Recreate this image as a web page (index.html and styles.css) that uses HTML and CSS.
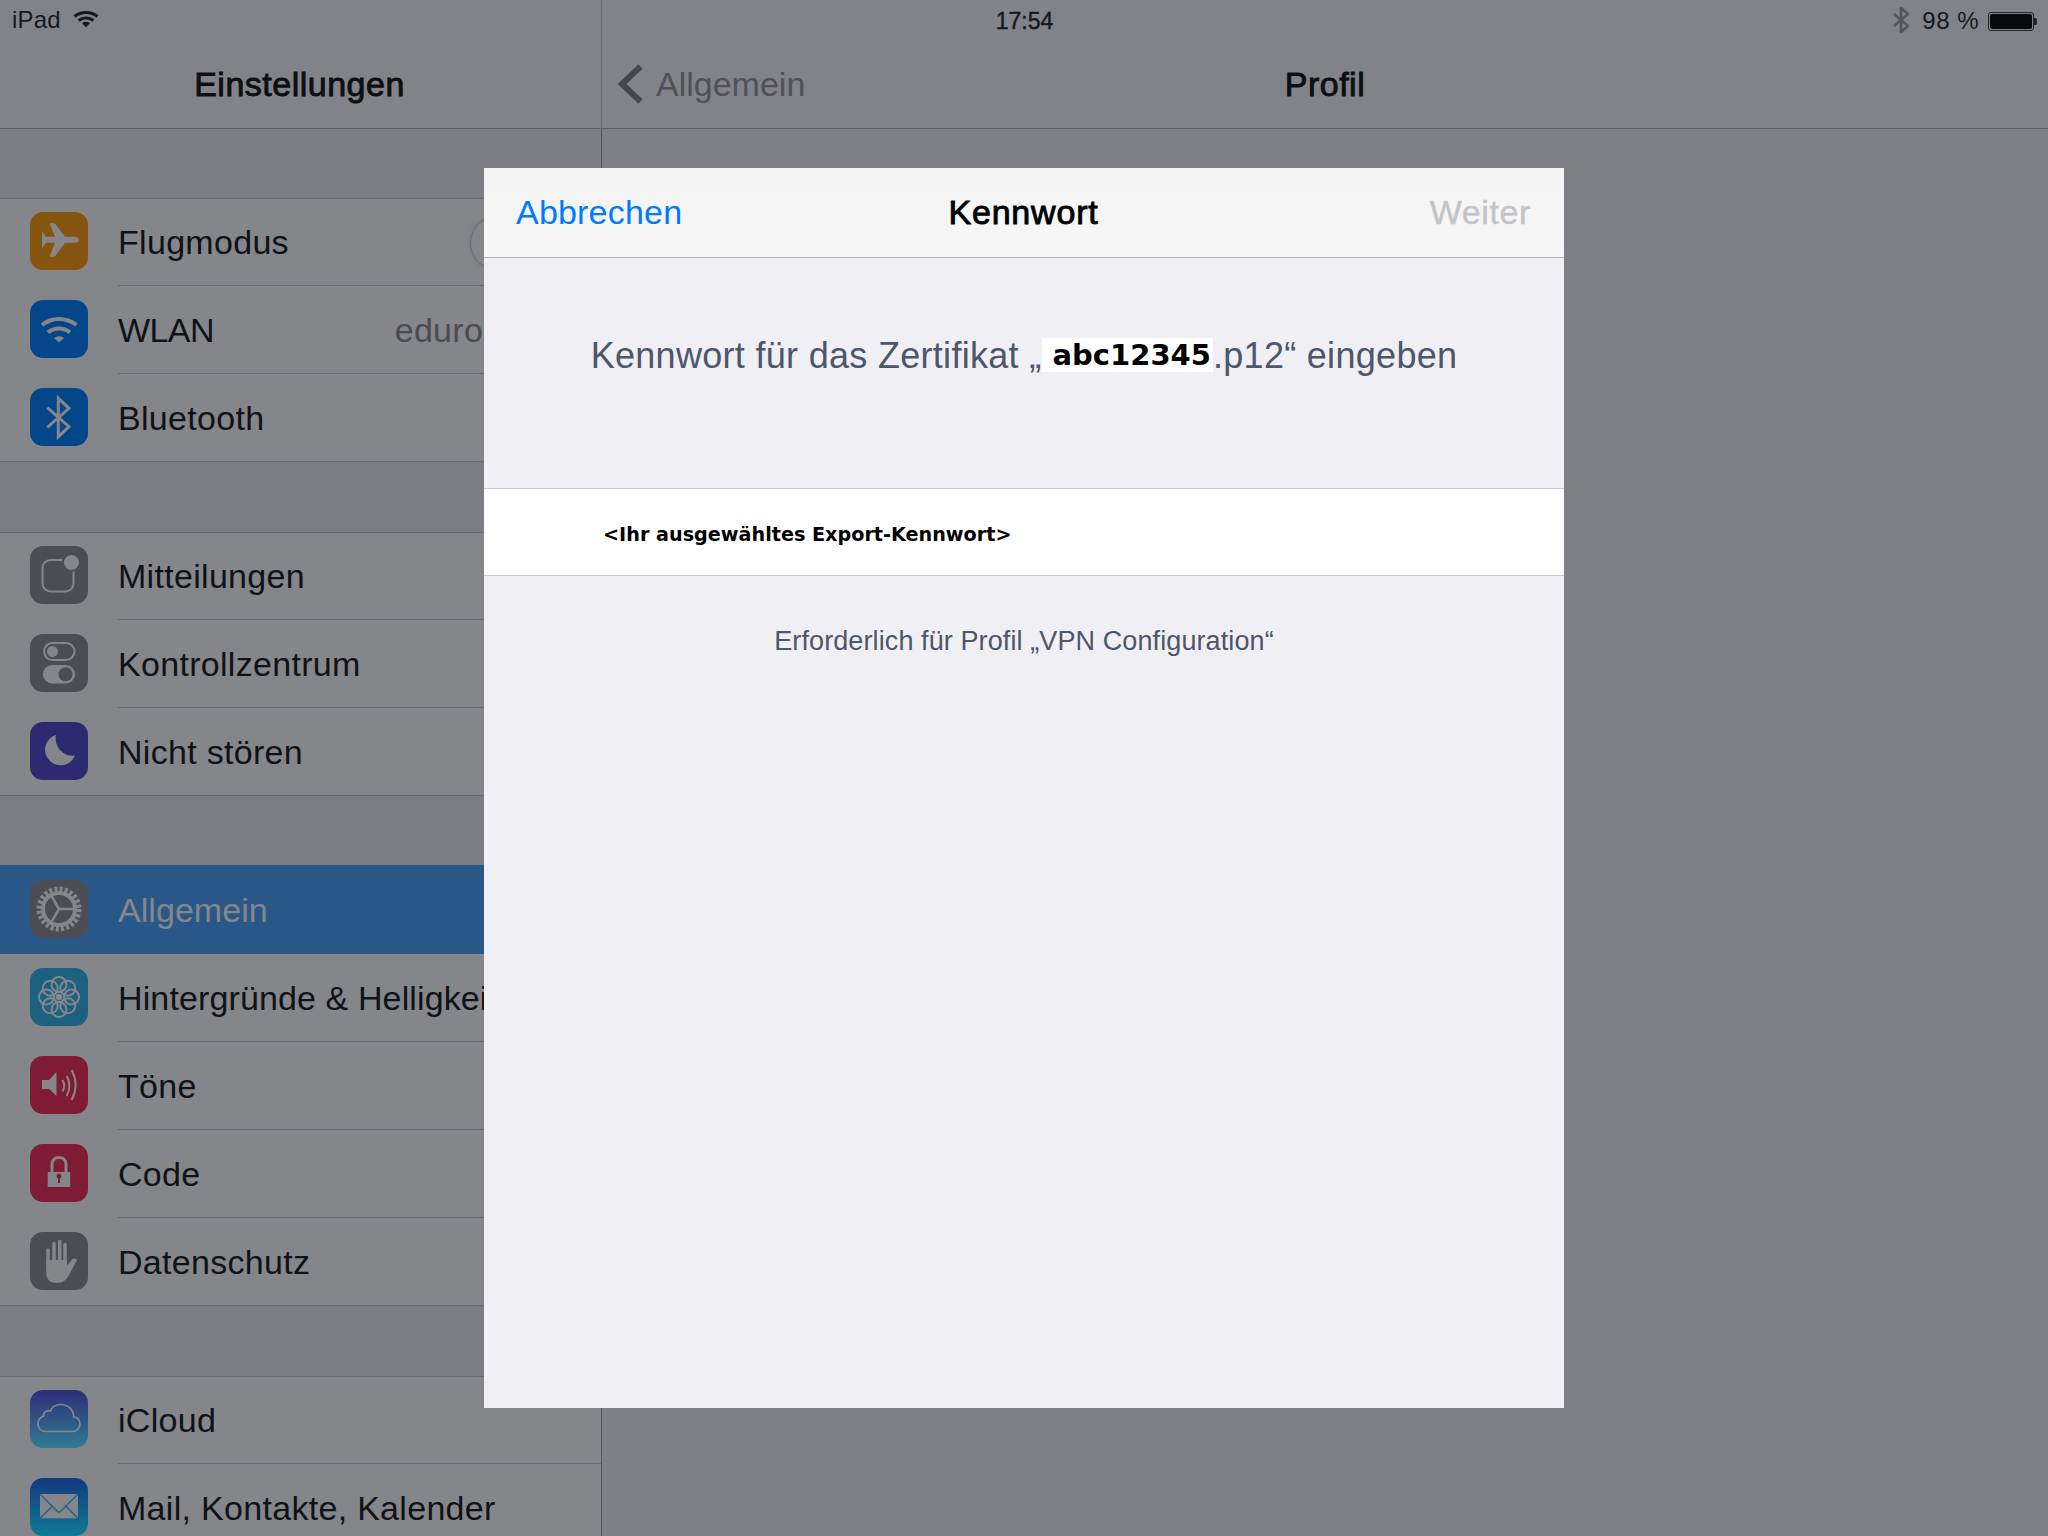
FILE: index.html
```html
<!DOCTYPE html>
<html lang="de">
<head>
<meta charset="utf-8">
<title>Profil</title>
<link rel="stylesheet" href="styles.css">
</head>
<body>
<div class="screen">
  <div class="status">
    <div class="status-left">
      <span>iPad</span>
      <svg class="s-wifi" viewBox="0 0 25 18"><path d="M1 6.5C7.5 1 17.5 1 24 6.5" /><path d="M5 10.5C9.5 7 15.500 7 20 10.500"/><path class="fill" d="M8.500 13Q12.500 10.500 16.500 13L12.500 17.500Z"/></svg>
    </div>
    <div class="status-time">17:54</div>
    <div class="status-right">
      <svg class="s-bt" viewBox="0 0 16 26"><path d="M1 7L15 19L8 25V1L15 7L1 19"/></svg>
      <span>98 %</span>
      <div class="battery"><div class="battery-level"></div></div>
      <div class="battery-nub"></div>
    </div>
  </div>

  <aside class="sidebar">
    <header class="nav nav-side"><h1 class="title">Einstellungen</h1></header>
    <div class="list">
      <section class="group">
        <div class="row first">
          <svg class="icon" viewBox="0 0 58 58"><rect class="bg amber" width="58" height="58" rx="13"/><path class="g" d="M49 27.800C49 26 47 24.700 44 24.700H35L24.700 11.300H19.500L25 24.700H16L12.500 19.500H12V36H12.500L16 30.800H25L19.500 44.700H24.700L35 30.800H44C47 30.800 49 29.500 49 27.800Z"/></svg>
          <div class="row-body"><span>Flugmodus</span><div class="toggle"></div></div>
        </div>
        <div class="row">
          <svg class="icon" viewBox="0 0 58 58"><rect class="bg blue" width="58" height="58" rx="13"/><path class="l w4" d="M12 25C22 17 36 17 46.500 25"/><path class="l w4" d="M18 32.500C24 27 34 27 40 32.500"/><path class="g" d="M24 38Q29 34.500 34 38L29 42.500Z"/></svg>
          <div class="row-body"><span class="tight">WLAN</span><span class="value">eduroam</span></div>
        </div>
        <div class="row last">
          <svg class="icon" viewBox="0 0 58 58"><rect class="bg blue" width="58" height="58" rx="13"/><path class="l w3" d="M17.300 19.700L39 38.700L28.300 48.700V10.300L39 20.300L17.300 39.300"/></svg>
          <div class="row-body"><span>Bluetooth</span></div>
        </div>
      </section>

      <section class="group">
        <div class="row first">
          <svg class="icon" viewBox="0 0 58 58"><rect class="bg slate" width="58" height="58" rx="13"/><rect class="l w2" x="12.500" y="14" width="31" height="31.500" rx="8"/><circle class="g ring" cx="41.500" cy="16.500" r="8.500"/></svg>
          <div class="row-body"><span>Mitteilungen</span></div>
        </div>
        <div class="row">
          <svg class="icon" viewBox="0 0 58 58"><rect class="bg slate" width="58" height="58" rx="13"/><rect class="l w2" x="14" y="9" width="30.500" height="17" rx="8.500"/><circle class="g" cx="22.500" cy="17.500" r="5.500"/><rect class="g" x="13" y="31" width="32" height="18.500" rx="9.250"/><circle class="knob" cx="35.500" cy="40.300" r="7"/></svg>
          <div class="row-body"><span>Kontrollzentrum</span></div>
        </div>
        <div class="row last">
          <svg class="icon" viewBox="0 0 58 58"><rect class="bg indigo" width="58" height="58" rx="13"/><path class="g" d="M26 13A15.500 15.500 0 1 0 45 33.500A17 17 0 0 1 26 13Z"/></svg>
          <div class="row-body"><span>Nicht stören</span></div>
        </div>
      </section>

      <section class="group">
        <div class="row selected">
          <svg class="icon" viewBox="0 0 58 58"><rect class="bg slate" width="58" height="58" rx="13"/><circle class="teeth" cx="29" cy="29" r="19.500"/><circle class="l w4" cx="29" cy="29" r="16"/><path class="l w25" d="M29 29H45M29 29L21 15.200M29 29L21 42.800"/></svg>
          <div class="row-body"><span>Allgemein</span></div>
        </div>
        <div class="row">
          <svg class="icon" viewBox="0 0 58 58"><rect class="bg teal" width="58" height="58" rx="13"/><g class="l w2"><circle cx="41.500" cy="29" r="7.500"/><circle cx="37.800" cy="37.800" r="7.500"/><circle cx="29" cy="41.500" r="7.500"/><circle cx="20.200" cy="37.800" r="7.500"/><circle cx="16.500" cy="29" r="7.500"/><circle cx="20.200" cy="20.200" r="7.500"/><circle cx="29" cy="16.500" r="7.500"/><circle cx="37.800" cy="20.200" r="7.500"/></g><circle class="g" cx="29" cy="29" r="3.300"/></svg>
          <div class="row-body"><span class="snug">Hintergründe &amp; Helligkeit</span></div>
        </div>
        <div class="row">
          <svg class="icon" viewBox="0 0 58 58"><rect class="bg crimson" width="58" height="58" rx="13"/><path class="g" d="M12 24H19L26.500 16V40L19 33H12Z"/><path class="l w2" d="M32.500 24Q36 30 32.500 35.500"/><path class="l w2" d="M36.700 20Q42 30 36.700 40"/><path class="l w2" d="M41.700 14Q49.500 29 41.700 44"/></svg>
          <div class="row-body"><span>Töne</span></div>
        </div>
        <div class="row">
          <svg class="icon" viewBox="0 0 58 58"><rect class="bg crimson" width="58" height="58" rx="13"/><path class="l w3" d="M22 29V20.500C22 11 36 11 36 20.500V29"/><rect class="g" x="17.700" y="28" width="22.500" height="15"/><path class="hole" d="M29 29.500a2.500 2.500 0 0 1 1 4.800V39H28V34.300A2.500 2.500 0 0 1 29 29.500Z"/></svg>
          <div class="row-body"><span>Code</span></div>
        </div>
        <div class="row last">
          <svg class="icon" viewBox="0 0 58 58"><rect class="bg slate" width="58" height="58" rx="13"/><path class="l w35" d="M18 18V32M24 11.500V30M29.700 9.500V30M35 12.500V32"/><path class="g" d="M16.200 28H37V33.500L43 26.500Q45 25.500 47 28L39 43Q35 51 27 51Q16.200 51 16.200 40Z"/></svg>
          <div class="row-body"><span>Datenschutz</span></div>
        </div>
      </section>

      <section class="group">
        <div class="row first">
          <svg class="icon" viewBox="0 0 58 58"><defs><linearGradient id="cloud" x1="0" y1="0" x2="0" y2="1"><stop offset="0" stop-color="#2f2e78"/><stop offset="1" stop-color="#2f7a92"/></linearGradient></defs><rect fill="url(#cloud)" width="58" height="58" rx="13"/><path class="l w17" d="M16 41.500H42C47 41.500 50 37.500 50 34C50 30 47 27 43.500 27C44 20 38 14.500 31 14.500C26 14.500 22 17 20.500 21C17 20 13 22 13.500 26C10 27.500 8 30.500 8 34C8 38 11 41.500 16 41.500Z"/></svg>
          <div class="row-body"><span>iCloud</span></div>
        </div>
        <div class="row">
          <svg class="icon" viewBox="0 0 58 58"><defs><linearGradient id="mail" x1="0" y1="0" x2="0" y2="1"><stop offset="0" stop-color="#14397f"/><stop offset="1" stop-color="#0f7a94"/></linearGradient></defs><rect fill="url(#mail)" width="58" height="58" rx="13"/><rect class="g" x="10" y="16" width="38" height="24.300"/><path class="mail-line" d="M10 16L27 33Q29 35 31 33L48 16M10 40.300L23 27.500M48 40.300L35 27.500"/></svg>
          <div class="row-body"><span>Mail, Kontakte, Kalender</span></div>
        </div>
      </section>
    </div>
  </aside>

  <main class="detail">
    <header class="nav nav-detail">
      <div class="back">
        <svg class="chevron" viewBox="0 0 25 40"><path d="M22.500 2.500L4 20L22.500 37.500"/></svg>
        <span>Allgemein</span>
      </div>
      <h1 class="title">Profil</h1>
    </header>
  </main>

  <div class="modal">
    <header class="modal-head">
      <span class="action">Abbrechen</span>
      <span class="title modal-title">Kennwort</span>
      <span class="action disabled">Weiter</span>
    </header>
    <p class="prompt">Kennwort für das Zertifikat „<span class="mask">abc12345</span>.p12“ eingeben</p>
    <div class="field">&lt;Ihr ausgewähltes Export-Kennwort&gt;</div>
    <p class="note">Erforderlich für Profil „VPN Configuration“</p>
  </div>
</div>
</body>
</html>
```

FILE: styles.css
```css
* { box-sizing: border-box; }
html, body { margin: 0; padding: 0; }
body { font-family: "Liberation Sans", Arial, sans-serif; color: #111216; }

.screen {
  position: relative;
  width: 2048px;
  height: 1536px;
  overflow: hidden;
  display: flex;
  background: #7f8085;
}

/* status bar */
.status {
  position: absolute;
  left: 0;
  top: 0;
  width: 100%;
  height: 40px;
  padding: 0 11px 0 12px;
  display: grid;
  grid-template-columns: 1fr auto 1fr;
  align-items: center;
  font-size: 24px;
  letter-spacing: .2px;
  color: #17181b;
}
.status-left { display: flex; align-items: center; gap: 12px; }
.status-time { padding-top: 2px; font-size: 23px; letter-spacing: 0; -webkit-text-stroke: .4px #17181b; }
.status-right { display: flex; align-items: center; justify-content: flex-end; padding-top: 2px; }
.status-right span { letter-spacing: .5px; }
.s-wifi { width: 26px; height: 18px; margin-top: -2px; fill: none; stroke: #17181b; stroke-width: 3; }
.s-wifi .fill { fill: #17181b; stroke: none; }
.s-bt { width: 16px; height: 26px; margin-top: -2px; fill: none; stroke: #55565b; stroke-width: 2.500; margin-right: 13px; }
.battery { width: 46px; height: 19px; margin-left: 9px; border: 1px solid #222327; border-radius: 3px; padding: 1px; }
.battery-level { height: 100%; background: #08090a; border-radius: 2px; }
.battery-nub { width: 3px; height: 7px; background: #222327; border-radius: 0 2px 2px 0; }

/* navigation bars */
.nav {
  height: 129px;
  padding-top: 40px;
  background: #828388;
  border-bottom: 1px solid #5f6065;
}
.title {
  margin: 0;
  font-size: 34px;
  font-weight: 400;
  letter-spacing: .5px;
  -webkit-text-stroke: .9px currentColor;
  color: #0e0f12;
}

/* sidebar */
.sidebar { width: 602px; flex: none; display: flex; flex-direction: column; }
.nav-side {
  display: flex;
  align-items: center;
  justify-content: center;
  padding-right: 2px;
  border-right: 1px solid #6d6e73;
}
.list {
  flex: 1;
  padding-top: 69px;
  background: #7c7d82;
  border-right: 1px solid #55565b;
  overflow: hidden;
}
.group { margin-bottom: 70px; background: #85868a; }
.row {
  height: 88px;
  padding-left: 30px;
  display: flex;
  font-size: 34px;
  letter-spacing: .3px;
}
.row.first { border-top: 1px solid #6a6b70; }
.row.first .icon { margin-top: 13px; }
.row.last { border-bottom: 1px solid #6a6b70; }
.row.last .row-body { border-bottom: 0; }
.row.selected { background: #295888; box-shadow: 0 -1px 0 #295888; letter-spacing: .05px; }
.row.selected .row-body { border-bottom: 0; color: #85868a; }
.icon { width: 58px; height: 58px; margin-top: 14px; flex: none; }
.row-body {
  flex: 1;
  min-width: 0;
  margin-left: 30px;
  padding-top: 1px;
  display: flex;
  align-items: center;
  white-space: nowrap;
  border-bottom: 1px solid #6a6b70;
}
.tight { letter-spacing: -.6px; }
.snug { letter-spacing: .12px; }
.value { margin-left: auto; margin-right: 70px; color: #4b4c51; letter-spacing: .3px; }
.toggle {
  width: 102px;
  height: 52px;
  margin-left: auto;
  margin-right: 28px;
  border-radius: 26px;
  background: #85868a;
  box-shadow: 0 0 0 1px #6b6c70, 0 0 4px 1px #74757a;
}

/* icon paints */
.bg.amber { fill: #85550f; }
.bg.blue { fill: #04468a; }
.bg.slate { fill: #4c4d52; }
.bg.indigo { fill: #2e2a72; }
.bg.teal { fill: #1c6280; }
.bg.crimson { fill: #7f1b34; }
.g { fill: #85868a; }
.l { fill: none; stroke: #85868a; }
.w17 { stroke-width: 1.700; }
.w2 { stroke-width: 2; }
.w25 { stroke-width: 2.500; }
.w3 { stroke-width: 3; }
.w35 { stroke-width: 3.500; stroke-linecap: round; }
.w4 { stroke-width: 4; }
.ring { stroke: #4c4d52; stroke-width: 2; }
.knob { fill: #4c4d52; }
.hole { fill: #7f1b34; }
.teeth { fill: none; stroke: #85868a; stroke-width: 6; stroke-dasharray: 3 2.105; }
.mail-line { fill: none; stroke: #1a5f96; stroke-width: 1.200; }

/* detail */
.detail { flex: 1; min-width: 0; }
.nav-detail {
  display: grid;
  grid-template-columns: 1fr auto 1fr;
  align-items: center;
  padding-left: 16px;
  padding-right: 16px;
}
.back { display: flex; align-items: center; gap: 13px; font-size: 34px; color: #505156; }
.chevron { width: 25px; height: 40px; fill: none; stroke: #46474c; stroke-width: 6; }

/* modal */
.modal {
  position: absolute;
  left: 484px;
  top: 168px;
  width: 1080px;
  height: 1240px;
  background: #efeff4;
  text-align: center;
}
.modal-head {
  height: 90px;
  padding: 0 33px 0 32px;
  display: grid;
  grid-template-columns: 1fr auto 1fr;
  align-items: center;
  background: linear-gradient(#f4f4f5, #f7f7f8);
  border-bottom: 1px solid #b3b3b6;
  font-size: 34px;
}
.action { color: #007aff; text-align: left; letter-spacing: .2px; }
.action.disabled { color: #c4c4c6; text-align: right; letter-spacing: .6px; -webkit-text-stroke: .4px #c4c4c6; }
.modal-title { color: #000; letter-spacing: .8px; }
.prompt {
  margin: 0;
  height: 230px;
  padding-top: 78px;
  font-size: 36px;
  letter-spacing: .3px;
  line-height: 40px;
  color: #4c566c;
  white-space: nowrap;
}
.mask {
  display: inline-block;
  height: 34px;
  padding: 0 2px 0 11px;
  background: #fff;
  color: #000;
  font-family: "DejaVu Sans", sans-serif;
  font-weight: 700;
  font-size: 29px;
  letter-spacing: 0;
  line-height: 34px;
  vertical-align: 3px;
}
.field {
  height: 88px;
  padding-left: 119px;
  padding-top: 4px;
  display: flex;
  align-items: center;
  background: #fff;
  border-top: 1px solid #c8c7cc;
  border-bottom: 1px solid #c8c7cc;
  color: #000;
  font-family: "DejaVu Sans", sans-serif;
  font-weight: 700;
  font-size: 19.200px;
}
.note {
  margin: 49px 0 0;
  font-size: 27px;
  letter-spacing: .1px;
  line-height: 32px;
  color: #4c566c;
}
```
